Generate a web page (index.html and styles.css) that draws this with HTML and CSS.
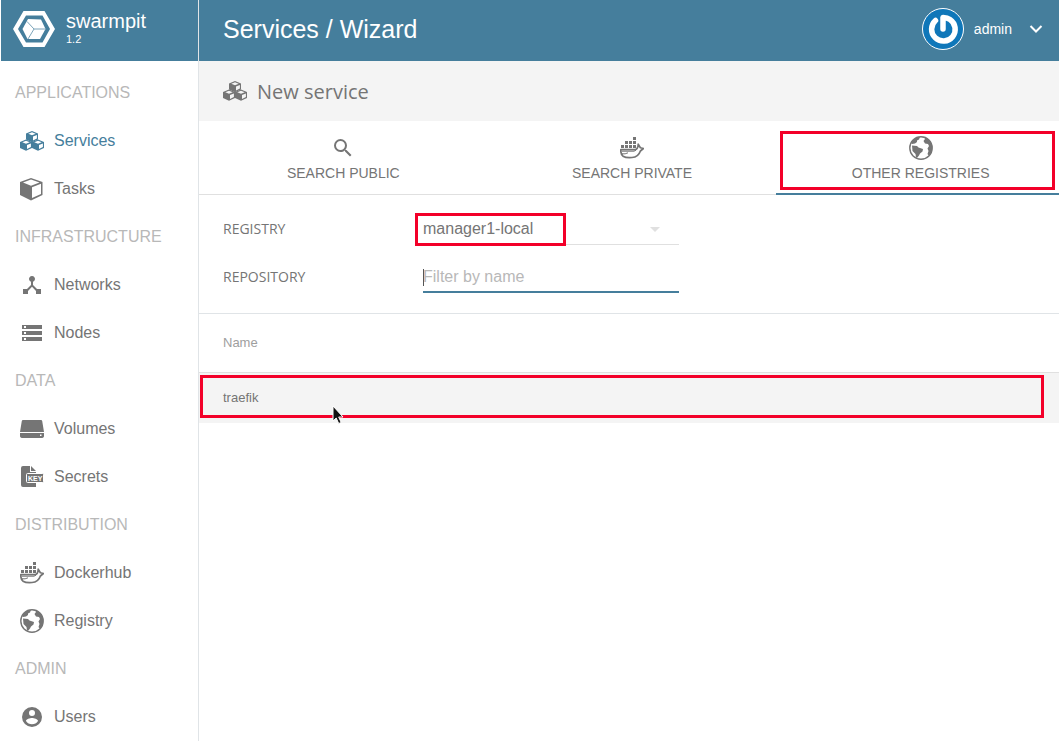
FILE: index.html
```html
<!DOCTYPE html>
<html lang="en">
<head>
<meta charset="utf-8">
<title>swarmpit - Services / Wizard</title>
<link rel="stylesheet" href="styles.css">
</head>
<body>
<svg class="sprite" aria-hidden="true">
  <symbol id="cubes" viewBox="0 0 24 24">
    <g fill-rule="evenodd">
      <path id="small-cube" d="M12 2l6 2.400v6l-6 2.800-6-2.800v-6zM12 3.200L8.300 4.700 12 6.300l3.700-1.600zM13 7.600v3.800l3.900-1.800V5.900z"/>
      <use href="#small-cube" x="-6" y="8.500"/>
      <use href="#small-cube" x="6" y="8.500"/>
    </g>
  </symbol>
  <symbol id="cube" viewBox="0 0 24 24">
    <path fill-rule="evenodd" d="M11 1l11.500 4v13L11 23.500 0 18V5zM11 2.600L3 5.500l8 3.300 8.500-3.300zM12 10.300v10.800l9-4.200V6.800z"/>
  </symbol>
  <symbol id="network" viewBox="0 0 24 24">
    <path d="M17 16l-4-4V8.820A3 3 0 1 0 11 8.820V12l-4 4H3v5h5v-3.050l4-4.200 4 4.200V21h5v-5z"/>
  </symbol>
  <symbol id="storage" viewBox="0 0 24 24">
    <path fill-rule="evenodd" d="M2 4h20v4H2zM4 5v2h2V5zM2 10h20v4H2zM4 11v2h2v-2zM2 16h20v4H2zM4 17v2h2v-2z"/>
  </symbol>
  <symbol id="drive" viewBox="0 0 24 24">
    <path fill-rule="evenodd" d="M3 3h18q1 0 1.200 1L24 15H0L1.800 4Q2 3 3 3zM0 16h24v3q0 2-3 2H3q-3 0-3-2zM20 17.500v1.500h1.500v-1.500z"/>
  </symbol>
  <symbol id="docker" viewBox="0 0 24 24">
    <path d="M13 1h3v3h-3zM5 5h3v3H5zM9 5h3v3H9zM13 5h3v3h-3zM1 9h3v3H1zM5 9h3v3H5zM9 9h3v3H9zM13 9h3v3h-3z"/>
    <path fill="none" stroke="currentColor" stroke-width="1.700" stroke-linejoin="round" d="M.8 13.700h14.200q3-.5 3.200-5.500l2.200 3.500 3 .8-3 2.500q-2 6-8.400 6.500-6 .5-9-1.300Q.5 18 .8 13.700z"/>
    <path fill="none" stroke="currentColor" d="M2 15.200h12l2-1M1.500 17.800q4 .5 6.500-1"/>
  </symbol>
  <symbol id="globe" viewBox="0 0 24 24">
    <circle cx="12" cy="12" r="11.200" fill="none" stroke="currentColor" stroke-width="1.400"/>
    <path d="M2 7Q5 1.500 11 1l-1 2.500-2 1V6L6 7.500 3 8zM15 1q3 .5 5.500 3.500L23 9v6l-3 5-1.500-2 1-3-1-2.500L20 10l-1-2-3-.500-1.500-2.500L16 3zM3 9.500l5 .5 1.500 1.500 4.500 1.500-.5 2.500-2.500 2-1 2L8 22l-1-.5-.5-3.500L3.500 15z"/>
  </symbol>
  <symbol id="account" viewBox="0 0 24 24">
    <path d="M12 2a10 10 0 1 0 0 20 10 10 0 0 0 0-20zm0 3a3 3 0 1 1 0 6 3 3 0 0 1 0-6zm0 14.200a7.200 7.200 0 0 1-6-3.220c.03-1.990 4-3.080 6-3.080s5.970 1.090 6 3.080a7.200 7.200 0 0 1-6 3.220z"/>
  </symbol>
  <symbol id="search" viewBox="0 0 24 24">
    <path d="M15.500 14h-.79l-.28-.27A6.470 6.470 0 0 0 16 9.500 6.500 6.500 0 1 0 9.500 16c1.610 0 3.090-.59 4.230-1.570l.27.28v.79l5 4.990L20.490 19zm-6 0a4.500 4.500 0 1 1 0-9 4.500 4.500 0 0 1 0 9z"/>
  </symbol>
</svg>

<div class="app">
  <aside class="sidebar">
    <div class="brand">
      <svg class="logo" viewBox="0 0 42 36" aria-hidden="true">
        <path fill="#fff" fill-rule="evenodd" d="M10.500 0h21L42 18 31.500 36h-21L0 18zM13 4.500L5 18l8 13.500h16.500L37 18 29.500 4.500z"/>
        <path fill="#fff" d="M15 8l13 .5L32.500 18 27 28H14.500L9.500 18z"/>
        <path fill="none" stroke="#457e9c" stroke-opacity=".7" d="M14 10.500L21 18h11M21 18l-6 10"/>
      </svg>
      <div>
        <div class="brand-name">swarmpit</div>
        <div class="brand-version">1.2</div>
      </div>
    </div>
    <nav class="menu">
      <h2>APPLICATIONS</h2>
      <a class="active" href="#services"><svg class="icon"><use href="#cubes"/></svg>Services</a>
      <a href="#tasks"><svg class="icon"><use href="#cube"/></svg>Tasks</a>
      <h2>INFRASTRUCTURE</h2>
      <a href="#networks"><svg class="icon"><use href="#network"/></svg>Networks</a>
      <a href="#nodes"><svg class="icon"><use href="#storage"/></svg>Nodes</a>
      <h2>DATA</h2>
      <a href="#volumes"><svg class="icon"><use href="#drive"/></svg>Volumes</a>
      <a href="#secrets">
        <svg class="icon" viewBox="0 0 24 24" aria-hidden="true">
          <path d="M3 1h7v6h6v15H3q-2 0-2-2V3q0-2 2-2zM11 1l5 5h-5z"/>
          <rect x="6.500" y="8.500" width="17" height="9" rx="1" stroke="#fff"/>
          <text class="key-text" x="8" y="16">KEY</text>
        </svg>Secrets</a>
      <h2>DISTRIBUTION</h2>
      <a href="#dockerhub"><svg class="icon"><use href="#docker"/></svg>Dockerhub</a>
      <a href="#registry"><svg class="icon"><use href="#globe"/></svg>Registry</a>
      <h2>ADMIN</h2>
      <a href="#users"><svg class="icon"><use href="#account"/></svg>Users</a>
    </nav>
  </aside>

  <main class="content">
    <header class="topbar">
      <h1>Services / Wizard</h1>
      <button class="user" type="button">
        <svg class="avatar" viewBox="0 0 42 42" aria-hidden="true">
          <circle cx="21" cy="21" r="20.500" fill="#0f77b9" stroke="#fff"/>
          <path fill="none" stroke="#fff" stroke-width="5.500" stroke-linecap="round" stroke-linejoin="round" d="M13.500 12.500A11.800 11.800 0 1 0 28 11.500Q25.500 9.800 21 9.500V21"/>
        </svg>
        <span>admin</span>
        <svg class="chevron" viewBox="0 0 14 8" aria-hidden="true"><path fill="none" stroke="#fff" stroke-width="2" d="M1.500 1L7 6.500 12.500 1"/></svg>
      </button>
    </header>

    <div class="panel-title">
      <svg class="icon"><use href="#cubes"/></svg>
      <h2>New service</h2>
    </div>

    <div class="tabs" role="tablist">
      <button class="tab" type="button" role="tab"><svg class="icon"><use href="#search"/></svg>SEARCH PUBLIC</button>
      <button class="tab" type="button" role="tab"><svg class="icon"><use href="#docker"/></svg>SEARCH PRIVATE</button>
      <button class="tab selected" type="button" role="tab" aria-selected="true"><svg class="icon"><use href="#globe"/></svg>OTHER REGISTRIES<span class="mark mark-tab"></span></button>
    </div>

    <form class="filters">
      <div class="field">
        <label for="registry">REGISTRY</label>
        <div class="control">
          <select id="registry"><option>manager1-local</option></select>
          <svg class="arrow" viewBox="0 0 10 5" aria-hidden="true"><path fill="#e0e0e0" d="M0 0h10L5 5z"/></svg>
          <span class="mark mark-select"></span>
        </div>
      </div>
      <div class="field">
        <label for="repository">REPOSITORY</label>
        <div class="control focused">
          <input id="repository" type="text" placeholder="Filter by name">
          <span class="caret"></span>
        </div>
      </div>
    </form>

    <div class="results">
      <table>
        <thead><tr><th scope="col">Name</th></tr></thead>
        <tbody><tr><td>traefik</td></tr></tbody>
      </table>
      <span class="mark mark-row"></span>
      <svg class="cursor" viewBox="0 0 12 20" aria-hidden="true"><path fill="#111" stroke="#fff" d="M1 1v15l3.200-3 2.500 5.500 2.500-1-2.500-5.500H11z"/></svg>
    </div>
  </main>
</div>
</body>
</html>
```
FILE: styles.css
```css
* { box-sizing: border-box; }

body {
  margin: 0;
  padding-left: 1px;
  background: #fff;
  color: #757575;
  font-family: "Liberation Sans", Arial, sans-serif;
  font-size: 16px;
}

h1, h2 { margin: 0; font-weight: 400; }

button, input, select {
  margin: 0;
  padding: 0;
  border: 0;
  background: none;
  color: inherit;
  font: inherit;
}

.sprite { position: absolute; width: 0; height: 0; }

.key-text {
  fill: #fff;
  font-size: 7px;
  font-weight: 700;
}

.icon {
  width: 24px;
  height: 24px;
  flex: none;
  fill: currentColor;
}

.app {
  display: grid;
  grid-template-columns: 198px minmax(0, 1fr);
  min-height: 100vh;
}

/* Sidebar */
.sidebar { border-right: 1px solid #e0e4e7; }

.brand {
  display: flex;
  align-items: center;
  gap: 11px;
  height: 61px;
  padding: 0 12px 4px;
  background: #457e9c;
  color: #fff;
}

.logo { width: 42px; height: 36px; }
.brand-name { font-size: 20px; line-height: 24px; }
.brand-version { padding-bottom: 4px; font-size: 11px; line-height: 12px; }

.menu { padding-top: 8px; }

.menu h2 {
  padding-left: 14px;
  color: #b8b8b8;
  font-size: 16px;
  line-height: 48px;
}

.menu a {
  display: flex;
  align-items: center;
  gap: 10px;
  height: 48px;
  padding-left: 19px;
  color: #757575;
  text-decoration: none;
}

.menu a.active { color: #457e9c; }

/* Top bar */
.content { overflow: hidden; }

.topbar {
  display: flex;
  align-items: center;
  justify-content: space-between;
  height: 61px;
  padding: 0 16px 3px 24px;
  background: #457e9c;
  color: #fff;
}

.topbar h1 { font-size: 25px; }

.user {
  display: flex;
  align-items: center;
  gap: 10px;
  font-size: 14px;
}

.avatar { width: 42px; height: 42px; }
.chevron { width: 14px; height: 8px; margin-left: 7px; }

.panel-title {
  display: flex;
  align-items: center;
  gap: 10px;
  height: 60px;
  padding-left: 24px;
  background: #f4f4f4;
}

.panel-title h2 {
  font-family: "Open Sans", sans-serif;
  font-size: 20px;
}

/* Tabs: the strip runs slightly past the right edge of the window */
.tabs {
  display: grid;
  grid-template-columns: repeat(3, 1fr);
  height: 74px;
  margin-right: -6px;
  border-bottom: 1px solid #e0e0e0;
}

.tab {
  position: relative;
  display: flex;
  flex-direction: column;
  align-items: center;
  gap: 5px;
  height: 74px;
  padding-top: 15px;
  font-size: 14px;
  line-height: 16px;
}

.tab.selected { border-bottom: 2px solid #457e9c; }

.mark {
  position: absolute;
  border: 3px solid #f30029;
  pointer-events: none;
}

.mark-tab { inset: 10px 10px 3px 4px; }

/* Filters */
.filters {
  padding: 10px 24px 12px;
  border-bottom: 1px solid #e0e4e7;
}

.field {
  display: grid;
  grid-template-columns: 200px minmax(0, 256px);
  align-items: center;
  height: 48px;
}

.field label {
  padding-bottom: 2px;
  font-family: "Open Sans", sans-serif;
  font-size: 14px;
}

.control {
  position: relative;
  height: 32px;
  border-bottom: 1px solid #e0e0e0;
}

.control.focused { border-bottom: 2px solid #457e9c; }

.control select,
.control input {
  width: 100%;
  height: 100%;
  outline: 0;
  appearance: none;
}

.control input { padding-top: 2px; }

.control input::placeholder { color: #b8b8b8; opacity: 1; }

.arrow {
  position: absolute;
  top: 14px;
  right: 19px;
  width: 10px;
  height: 5px;
}

.caret {
  position: absolute;
  top: 8px;
  left: 0;
  width: 1px;
  height: 17px;
  background: #555;
}

.mark-select {
  top: 0;
  left: -8px;
  width: 151px;
  height: 33px;
}

/* Results */
.results { position: relative; }

table {
  width: 100%;
  border-spacing: 0;
  font-size: 13px;
}

th, td {
  padding: 0 24px 2px;
  font-weight: 400;
  text-align: left;
}

th {
  height: 59px;
  border-bottom: 1px solid #e0e0e0;
  color: #9e9e9e;
}

td { height: 50px; background: #f4f4f4; }

.mark-row {
  top: 61px;
  right: 15px;
  left: 1px;
  height: 43px;
}

.cursor {
  position: absolute;
  top: 91px;
  left: 133px;
  width: 12px;
  height: 20px;
}
```
